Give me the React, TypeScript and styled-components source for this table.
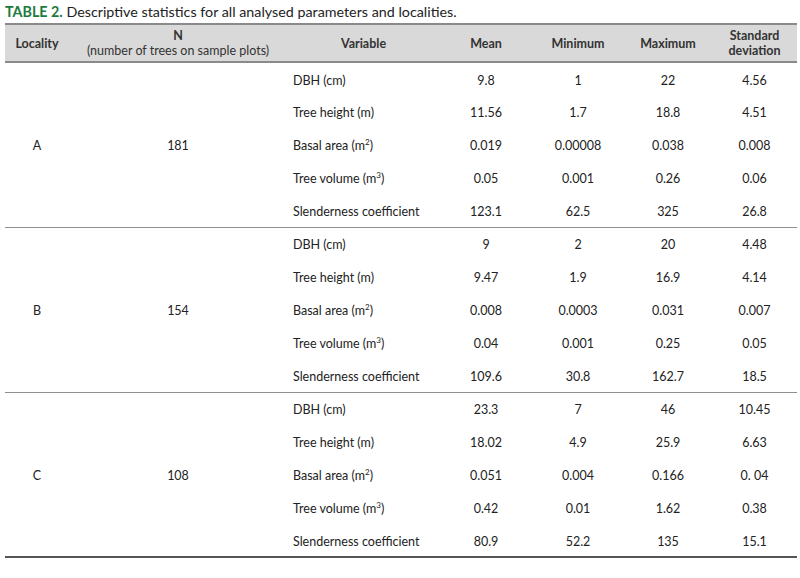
import React from 'react';
import styled, { createGlobalStyle } from 'styled-components';

const GlobalStyle = createGlobalStyle`
  body {
    margin: 0;
    background: #ffffff;
    font-family: Lato, "Open Sans", sans-serif;
    color: #222;
  }
`;

type Row = { variable: React.ReactNode; mean: string; min: string; max: string; sd: string };
type Group = { locality: string; n: string; rows: Row[] };

const names: React.ReactNode[] = [
  'DBH (cm)',
  'Tree height (m)',
  <>Basal area (m<sup>2</sup>)</>,
  <>Tree volume (m<sup>3</sup>)</>,
  'Slenderness coefficient',
];

const toRows = (values: string[][]): Row[] =>
  values.map((v, i) => ({ variable: names[i], mean: v[0], min: v[1], max: v[2], sd: v[3] }));

const groups: Group[] = [
  {
    locality: 'A',
    n: '181',
    rows: toRows([
      ['9.8', '1', '22', '4.56'],
      ['11.56', '1.7', '18.8', '4.51'],
      ['0.019', '0.00008', '0.038', '0.008'],
      ['0.05', '0.001', '0.26', '0.06'],
      ['123.1', '62.5', '325', '26.8'],
    ]),
  },
  {
    locality: 'B',
    n: '154',
    rows: toRows([
      ['9', '2', '20', '4.48'],
      ['9.47', '1.9', '16.9', '4.14'],
      ['0.008', '0.0003', '0.031', '0.007'],
      ['0.04', '0.001', '0.25', '0.05'],
      ['109.6', '30.8', '162.7', '18.5'],
    ]),
  },
  {
    locality: 'C',
    n: '108',
    rows: toRows([
      ['23.3', '7', '46', '10.45'],
      ['18.02', '4.9', '25.9', '6.63'],
      ['0.051', '0.004', '0.166', '0. 04'],
      ['0.42', '0.01', '1.62', '0.38'],
      ['80.9', '52.2', '135', '15.1'],
    ]),
  },
];

function App() {
  return (
    <Page>
      <GlobalStyle />
      <Caption>
        <Label>TABLE 2.</Label> Descriptive statistics for all analysed parameters and localities.
      </Caption>
      <Table>
        <colgroup>
          <Col $w={64} />
          <Col $w={218} />
          <Col $w={153} />
          <Col $w={92} />
          <Col $w={92} />
          <Col $w={88} />
          <col />
        </colgroup>
        <thead>
          <tr>
            <Head>Locality</Head>
            <Head>
              N
              <br />
              <Light>(number of trees on sample plots)</Light>
            </Head>
            <Head>Variable</Head>
            <Head>Mean</Head>
            <Head>Minimum</Head>
            <Head>Maximum</Head>
            <Head>
              Standard
              <br />
              deviation
            </Head>
          </tr>
        </thead>
        {groups.map((g) => (
          <Body key={g.locality}>
            {g.rows.map((r, i) => (
              <tr key={i}>
                {i === 0 && (
                  <>
                    <Cell rowSpan={5} $center>
                      {g.locality}
                    </Cell>
                    <Cell rowSpan={5} $center>
                      {g.n}
                    </Cell>
                  </>
                )}
                <Cell>{r.variable}</Cell>
                <Cell $center>{r.mean}</Cell>
                <Cell $center>{r.min}</Cell>
                <Cell $center>{r.max}</Cell>
                <Cell $center>{r.sd}</Cell>
              </tr>
            ))}
          </Body>
        ))}
      </Table>
    </Page>
  );
}

const Page = styled.div`
  width: 800px;
  padding: 3px 3px 0 5px;
  box-sizing: border-box;
`;

const Caption = styled.div`
  font-size: 14.3px;
  line-height: 18px;
  color: #222;
  margin-bottom: 2px;
`;

const Label = styled.span`
  color: #1b7a3c;
  font-weight: bold;
`;

const Table = styled.table`
  width: 792px;
  border-collapse: collapse;
  table-layout: fixed;
  font-size: 12.5px;
  border-top: 2px solid #8a8a8a;
  border-bottom: 2px solid #555;
`;

const Col = styled.col<{ $w: number }>`
  width: ${(p) => p.$w}px;
`;

const Head = styled.th`
  background: #d9d9d9;
  height: 36px;
  padding: 0;
  font-weight: bold;
  color: #333;
  line-height: 15px;
  text-align: center;
  vertical-align: middle;
  border-bottom: 2px solid #8a8a8a;
`;

const Light = styled.span`
  font-weight: normal;
`;

const Body = styled.tbody`
  & + & {
    border-top: 1px solid #8f8f8f;
  }
`;

const Cell = styled.td<{ $center?: boolean }>`
  height: 33px;
  box-sizing: border-box;
  padding: 2px 0 0 ${(p) => (p.$center ? '0' : '6px')};
  text-align: ${(p) => (p.$center ? 'center' : 'left')};
  vertical-align: middle;
  color: #222;
  sup {
    font-size: 8px;
    line-height: 0;
  }
`;

export default App;
